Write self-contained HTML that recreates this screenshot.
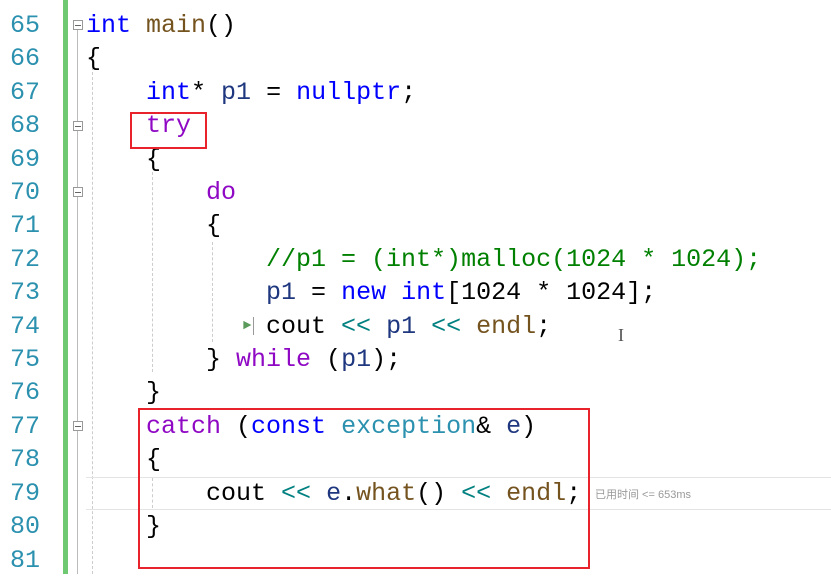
<!DOCTYPE html><html><head><meta charset="utf-8"><style>
body{margin:0;width:831px;height:574px;background:#fff;overflow:hidden;position:relative;font-family:"Liberation Mono",monospace;}
.ln{position:absolute;left:0;width:40px;text-align:right;color:#2b91af;font-size:25px;line-height:33.4px;}
.code{position:absolute;left:86px;top:9px;font-size:25px;line-height:33.4px;white-space:pre;color:#000;}
.k{color:#0000ff}.c{color:#8f08c4}.f{color:#74531f}.g{color:#008000}.t{color:#2b91af}.o{color:#008080}.v{color:#1f377f}
.fold{position:absolute;left:73px;width:8px;height:8px;border:1px solid #999;background:#fff;}
.fold:after{content:"";position:absolute;left:1px;right:1px;top:3.5px;height:1px;background:#666}
.dg{position:absolute;border-left:1px dashed #ccc;}
</style></head><body>
<div style="position:absolute;left:63px;top:0;width:5px;height:574px;background:#6fc872"></div>
<div style="position:absolute;left:77px;top:22px;width:1px;height:552px;background:#bbb"></div>
<div class="dg" style="left:92px;top:52px;height:522px"></div>
<div class="dg" style="left:152px;top:172px;height:200px"></div>
<div class="dg" style="left:212px;top:242px;height:100px"></div>
<div class="dg" style="left:152px;top:478px;height:30px"></div>
<div style="position:absolute;left:86px;top:477px;width:745px;height:31px;border-top:1px solid #e4e4e4;border-bottom:1px solid #e4e4e4;"></div>
<div class="fold" style="top:20px"></div><div class="fold" style="top:121px"></div><div class="fold" style="top:187px"></div><div class="fold" style="top:421px"></div>
<div class="ln" style="top:9px">65<br>66<br>67<br>68<br>69<br>70<br>71<br>72<br>73<br>74<br>75<br>76<br>77<br>78<br>79<br>80<br>81</div>
<div class="code"><span class="k">int</span> <span class="f">main</span>()
{
    <span class="k">int</span>* <span class="v">p1</span> = <span class="k">nullptr</span>;
    <span class="c">try</span>
    {
        <span class="c">do</span>
        {
            <span class="g">//p1 = (int*)malloc(1024 * 1024);</span>
            <span class="v">p1</span> = <span class="k">new</span> <span class="k">int</span>[1024 * 1024];
            cout <span class="o">&lt;&lt;</span> <span class="v">p1</span> <span class="o">&lt;&lt;</span> <span class="f">endl</span>;
        } <span class="c">while</span> (<span class="v">p1</span>);
    }
    <span class="c">catch</span> (<span class="k">const</span> <span class="t">exception</span>&amp; <span class="v">e</span>)
    {
        cout <span class="o">&lt;&lt;</span> <span class="v">e</span>.<span class="f">what</span>() <span class="o">&lt;&lt;</span> <span class="f">endl</span>;
    }
</div>
<div style="position:absolute;left:243px;top:318px;color:#5a9a5a;font-size:14px">&#9658;</div>
<div style="position:absolute;left:253px;top:317px;width:1px;height:18px;background:#999"></div>
<div style="position:absolute;left:130px;top:112px;width:73px;height:33px;border:2px solid #e8232b"></div>
<div style="position:absolute;left:138px;top:408px;width:448px;height:157px;border:2px solid #e8232b"></div>
<div style="position:absolute;left:595px;top:486px;font-family:'Liberation Sans','Noto Sans CJK SC',sans-serif;font-size:11px;color:#999">已用时间 &lt;= 653ms</div>
<div style="position:absolute;left:618px;top:325px;font-size:18px;color:#555;font-family:'Liberation Serif',serif">I</div>
</body></html>
